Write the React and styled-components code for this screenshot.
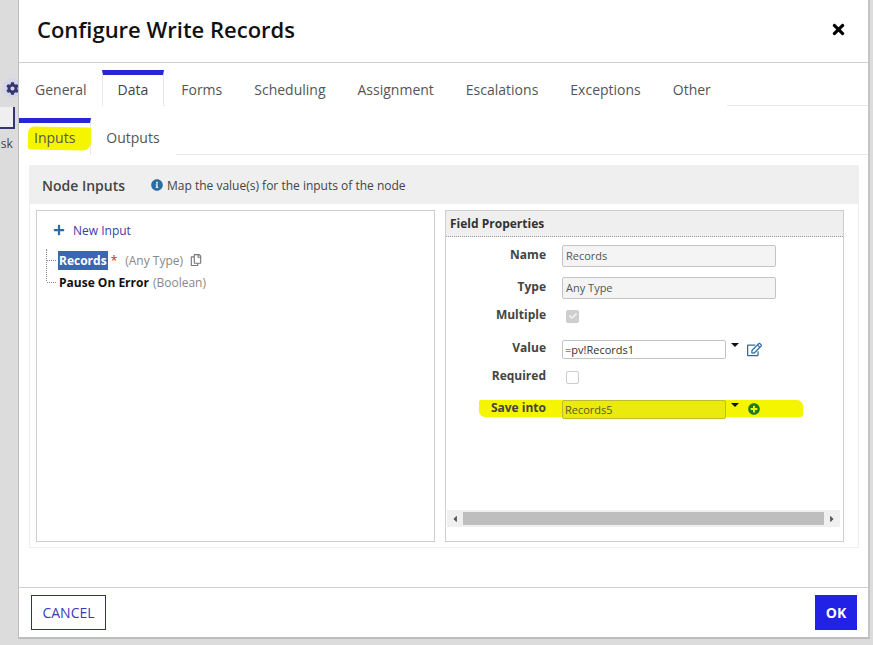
import React from 'react';
import styled, { createGlobalStyle } from 'styled-components';
import { FaCog, FaInfoCircle, FaPlus, FaRegCopy, FaRegEdit, FaPlusCircle, FaTimes, FaCheck, FaCaretLeft, FaCaretRight } from 'react-icons/fa';

const GlobalStyle = createGlobalStyle`
    html, body {
        margin: 0;
        padding: 0;
        overflow: hidden;
    }
    body {
        font-family: "Open Sans", "Liberation Sans", sans-serif;
    }
`

const mainTabs = ['General', 'Data', 'Forms', 'Scheduling', 'Assignment', 'Escalations', 'Exceptions', 'Other'];

const fields = [
    { label: 'Name', kind: 'readonly', value: 'Records', top: 8 },
    { label: 'Type', kind: 'readonly', value: 'Any Type', top: 10 },
    { label: 'Multiple', kind: 'check', checked: true, top: 6 },
    { label: 'Value', kind: 'expr', value: '=pv!Records1', top: 11 },
    { label: 'Required', kind: 'check', top: 6 },
    { label: 'Save into', kind: 'save', value: 'Records5', top: 10 },
];

const App = () => {
    return (
        <Backdrop>
            <GlobalStyle />
            <GearHalo><FaCog size={13} /></GearHalo>
            <NodeStub />
            <NodeLabel>ask</NodeLabel>
            <Dialog>
                <Header>
                    <Title>Configure Write Records</Title>
                    <CloseIcon><FaTimes size={17} /></CloseIcon>
                </Header>
                <MainTabs>
                    {mainTabs.map((tab) => (
                        <MainTab key={tab} $active={tab === 'Data'}>{tab}</MainTab>
                    ))}
                </MainTabs>
                <SubTabs>
                    <SubTab $active>
                        <InputsMark />
                        <span>Inputs</span>
                    </SubTab>
                    <SubTab>Outputs</SubTab>
                </SubTabs>
                <Content>
                    <Section>
                        <SectionHeader>
                            <SectionTitle>Node Inputs</SectionTitle>
                            <InfoIcon><FaInfoCircle size={12} /></InfoIcon>
                            <SectionHint>Map the value(s) for the inputs of the node</SectionHint>
                        </SectionHeader>
                        <Panels>
                            <TreePanel>
                                <NewInput>
                                    <FaPlus size={12} color="#2b6da3" />
                                    <span>New Input</span>
                                </NewInput>
                                <Tree>
                                    <TreeRow>
                                        <SelectedName>Records</SelectedName>
                                        <Required>*</Required>
                                        <TypeHint $gap={8}>(Any Type)</TypeHint>
                                        <CopyIcon><FaRegCopy size={12} /></CopyIcon>
                                    </TreeRow>
                                    <TreeRow>
                                        <InputName>Pause On Error</InputName>
                                        <TypeHint $gap={4}>(Boolean)</TypeHint>
                                    </TreeRow>
                                </Tree>
                            </TreePanel>
                            <PropsPanel>
                                <PropsHeader>Field Properties</PropsHeader>
                                <PropsBody>
                                    {fields.map((field) => (
                                        <FieldRow key={field.label} $top={field.top}>
                                            {field.kind === 'save' && <SaveMark />}
                                            <FieldLabel>{field.label}</FieldLabel>
                                            {field.kind === 'readonly' && <ReadOnlyInput>{field.value}</ReadOnlyInput>}
                                            {field.kind === 'check' && (
                                                <CheckBox $checked={field.checked}>
                                                    {field.checked && <FaCheck size={8} color="#f4f4f4" />}
                                                </CheckBox>
                                            )}
                                            {field.kind === 'expr' && (
                                                <>
                                                    <ExprInput>{field.value}</ExprInput>
                                                    <Caret />
                                                    <EditIcon><FaRegEdit size={15} /></EditIcon>
                                                </>
                                            )}
                                            {field.kind === 'save' && (
                                                <>
                                                    <ExprInput $marked>{field.value}</ExprInput>
                                                    <Caret />
                                                    <AddIcon><FaPlusCircle size={12} /></AddIcon>
                                                </>
                                            )}
                                        </FieldRow>
                                    ))}
                                </PropsBody>
                                <ScrollBar>
                                    <ScrollArrow><FaCaretLeft size={10} /></ScrollArrow>
                                    <ScrollThumb />
                                    <ScrollArrow><FaCaretRight size={10} /></ScrollArrow>
                                </ScrollBar>
                            </PropsPanel>
                        </Panels>
                    </Section>
                </Content>
                <Footer>
                    <CancelButton>CANCEL</CancelButton>
                    <OkButton>OK</OkButton>
                </Footer>
            </Dialog>
        </Backdrop>
    )
}

const Backdrop = styled.div`
    position: relative;
    box-sizing: border-box;
    width: 873px;
    height: 645px;
    padding-left: 18px;
    background-color: #dddcdc;
    overflow: hidden;
`

const GearHalo = styled.div`
    position: absolute;
    left: 2px;
    top: 78px;
    width: 20px;
    height: 20px;
    border-radius: 50%;
    background-color: #d5d5e6;
    color: #35356f;
    display: flex;
    align-items: center;
    justify-content: center;
`

const NodeStub = styled.div`
    position: absolute;
    left: -10px;
    top: 107px;
    width: 23px;
    height: 20px;
    border-right: 2px solid #35356f;
    border-bottom: 2px solid #35356f;
    background-color: #efeff2;
`

const NodeLabel = styled.div`
    position: absolute;
    left: -6px;
    top: 135px;
    font-size: 12px;
    color: #444;
`

const Dialog = styled.div`
    position: relative;
    box-sizing: border-box;
    width: 852px;
    height: 639px;
    background-color: white;
    border-left: 1px solid #bdbdbd;
    border-right: 2px solid #c4c4c4;
    border-bottom: 2px solid #bdbdbd;
    display: flex;
    flex-direction: column;
`

const Header = styled.div`
    box-sizing: border-box;
    height: 63px;
    flex: none;
    padding: 0 21px 4px 18px;
    border-bottom: 1px solid #d0d0d0;
    display: flex;
    align-items: center;
    justify-content: space-between;
`

const Title = styled.div`
    font-size: 22px;
    font-weight: 600;
    color: #111;
`

const CloseIcon = styled.div`
    display: flex;
    color: #000;
`

const MainTabs = styled.div`
    box-sizing: border-box;
    height: 43px;
    flex: none;
    padding-top: 7px;
    border-bottom: 1px solid #e8e8e8;
    display: flex;
`

const MainTab = styled.div`
    box-sizing: border-box;
    height: 36px;
    padding: 0 15px;
    margin-right: ${(props) => (props.$active ? '1px' : '0')};
    font-size: 14px;
    line-height: 29px;
    color: ${(props) => (props.$active ? '#444' : '#555')};
    border-top: 5px solid ${(props) => (props.$active ? '#2626d9' : 'transparent')};
    border-left: 1px solid ${(props) => (props.$active ? '#e8e8e8' : 'transparent')};
    border-right: 1px solid ${(props) => (props.$active ? '#e8e8e8' : 'transparent')};
    background-color: white;
    position: relative;
    margin-left: ${(props) => (props.$active ? '-1px' : '0')};
    height: 36px;
    margin-bottom: -1px;
    width: fit-content;
`

const SubTabs = styled.div`
    box-sizing: border-box;
    height: 49px;
    flex: none;
    padding-top: 12px;
    border-bottom: 1px solid #e8e8e8;
    display: flex;
`

const SubTab = styled.div`
    position: relative;
    box-sizing: border-box;
    height: 37px;
    padding: 0 15px;
    margin-right: ${(props) => (props.$active ? '0' : '0')};
    font-size: 14px;
    line-height: 29px;
    color: #555;
    border-top: 5px solid ${(props) => (props.$active ? '#2626d9' : 'transparent')};
    border-right: 1px solid ${(props) => (props.$active ? '#e8e8e8' : 'transparent')};
    background-color: white;

    span {
        position: relative;
    }
`

const InputsMark = styled.div`
    position: absolute;
    left: 9px;
    top: 4px;
    width: 63px;
    height: 23px;
    background-color: #f5f500;
    border-radius: 6px 3px 8px 3px;
    transform: rotate(1deg);
`

const Content = styled.div`
    flex: 1;
    padding: 10px 10px 0 10px;
`

const Section = styled.div`
    box-sizing: border-box;
    width: 830px;
    height: 383px;
    border: 1px solid #efefef;
    display: flex;
    flex-direction: column;
`

const SectionHeader = styled.div`
    box-sizing: border-box;
    height: 38px;
    flex: none;
    padding-left: 12px;
    background-color: #efefef;
    display: flex;
    align-items: center;
`

const SectionTitle = styled.div`
    font-size: 14px;
    font-weight: 600;
    color: #444;
    width: 109px;
`

const InfoIcon = styled.div`
    display: flex;
    color: #2b6da3;
    margin-right: 4px;
`

const SectionHint = styled.div`
    font-size: 12px;
    color: #444;
`

const Panels = styled.div`
    flex: 1;
    padding: 6px 14px 5px 6px;
    display: flex;
    gap: 10px;
`

const TreePanel = styled.div`
    box-sizing: border-box;
    width: 399px;
    border: 1px solid #cfcfcf;
    padding: 11px 0 0 9px;
`

const NewInput = styled.div`
    display: flex;
    align-items: center;
    gap: 8px;
    height: 16px;
    padding-left: 7px;
    font-size: 12px;
    color: #3f3aa8;
`

const Tree = styled.div`
    position: relative;
    margin-top: 11px;
    border-left: 1px dotted #888;
    height: 32px;
    display: flex;
    flex-direction: column;
`

const TreeRow = styled.div`
    position: relative;
    height: 22px;
    padding-left: 11px;
    flex: none;
    display: flex;
    align-items: center;
    font-size: 12px;

    &::before {
        content: '';
        position: absolute;
        left: 0;
        top: 11px;
        width: 9px;
        border-top: 1px dotted #888;
    }
`

const SelectedName = styled.span`
    background-color: #3a66b5;
    color: white;
    font-weight: 700;
    height: 19px;
    line-height: 19px;
    padding: 0 1px;
    margin-left: 0;
`

const Required = styled.span`
    color: #e02020;
    margin-left: 3px;
`

const InputName = styled.span`
    font-weight: 700;
    color: #111;
    padding-left: 1px;
`

const TypeHint = styled.span`
    color: #888;
    margin-left: ${(props) => props.$gap}px;
`

const CopyIcon = styled.span`
    display: flex;
    color: #777;
    margin-left: 7px;
`

const PropsPanel = styled.div`
    box-sizing: border-box;
    width: 399px;
    border: 1px solid #cfcfcf;
    display: flex;
    flex-direction: column;
`

const PropsHeader = styled.div`
    box-sizing: border-box;
    height: 26px;
    flex: none;
    padding-left: 4px;
    background-color: #efefef;
    border-bottom: 1px dotted #999;
    font-size: 12px;
    font-weight: 700;
    line-height: 25px;
    color: #333;
`

const PropsBody = styled.div`
    flex: 1;
`

const FieldRow = styled.div`
    position: relative;
    display: flex;
    align-items: center;
    height: 22px;
    margin-top: ${(props) => props.$top}px;
`

const SaveMark = styled.div`
    position: absolute;
    left: 33px;
    top: 2px;
    width: 324px;
    height: 17px;
    background-color: #f5f500;
    border-radius: 2px 6px 3px 6px;
`

const FieldLabel = styled.div`
    position: relative;
    box-sizing: border-box;
    width: 100px;
    margin-right: 16px;
    margin-top: -4px;
    text-align: right;
    font-size: 12px;
    font-weight: 700;
    color: #444;
`

const ReadOnlyInput = styled.div`
    box-sizing: border-box;
    width: 214px;
    height: 22px;
    padding-left: 3px;
    background-color: #f4f4f4;
    border: 1px solid #c4c4c4;
    border-radius: 2px;
    font-size: 11px;
    line-height: 20px;
    color: #555;
`

const CheckBox = styled.div`
    box-sizing: border-box;
    width: 13px;
    height: 13px;
    margin-left: 4px;
    border: 1px solid #ccc;
    border-radius: 2px;
    background-color: ${(props) => (props.$checked ? '#cfcfcf' : 'white')};
    display: flex;
    align-items: center;
    justify-content: center;
`

const ExprInput = styled.div`
    position: relative;
    box-sizing: border-box;
    width: 164px;
    height: 19px;
    padding-left: 2px;
    background-color: ${(props) => (props.$marked ? '#eaea0c' : 'white')};
    border: 1px solid ${(props) => (props.$marked ? '#bdbd2a' : '#c4c4c4')};
    border-radius: 2px;
    font-size: 11px;
    line-height: 18px;
    color: ${(props) => (props.$marked ? '#5a5a20' : '#333')};
`

const Caret = styled.div`
    position: relative;
    width: 0;
    height: 0;
    margin: -9px 0 0 5px;
    border-left: 4px solid transparent;
    border-right: 4px solid transparent;
    border-top: 4px solid #111;
`

const EditIcon = styled.div`
    display: flex;
    margin-left: 8px;
    color: #2b6da3;
`

const AddIcon = styled.div`
    position: relative;
    display: flex;
    margin-left: 9px;
    color: #1d7a1d;
`

const ScrollBar = styled.div`
    box-sizing: border-box;
    height: 17px;
    margin: 0 3px 14px 1px;
    padding: 2px 0;
    background-color: #f0f0f0;
    display: flex;
    align-items: center;
`

const ScrollArrow = styled.div`
    width: 16px;
    flex: none;
    display: flex;
    justify-content: center;
    color: #555;
`

const ScrollThumb = styled.div`
    flex: 1;
    height: 13px;
    background-color: #bebebe;
`

const Footer = styled.div`
    box-sizing: border-box;
    height: 50px;
    flex: none;
    padding: 7px 11px 0 12px;
    border-top: 1px solid #d0d0d0;
    display: flex;
    align-items: flex-start;
    justify-content: space-between;
`

const CancelButton = styled.button`
    box-sizing: border-box;
    width: 75px;
    height: 35px;
    padding: 0;
    background-color: white;
    border: 1px solid #2a2a9e;
    font-family: inherit;
    font-size: 14px;
    color: #3a3ab8;
`

const OkButton = styled.button`
    box-sizing: border-box;
    width: 42px;
    height: 35px;
    padding: 0;
    background-color: #2222e6;
    border: none;
    font-family: inherit;
    font-size: 14px;
    font-weight: 700;
    color: white;
`

export default App
